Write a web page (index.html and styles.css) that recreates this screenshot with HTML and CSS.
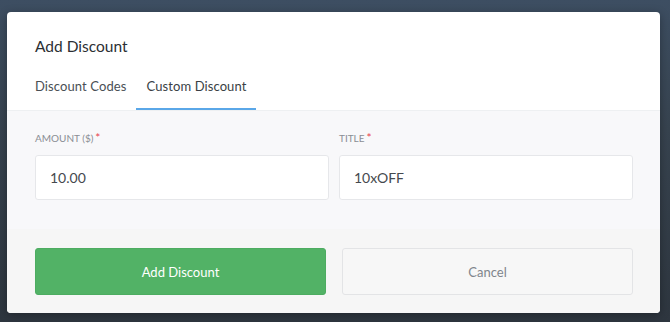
FILE: index.html
```html
<!DOCTYPE html>
<html lang="en">
<head>
  <meta charset="UTF-8" />
  <title>Add Discount</title>
  <link rel="stylesheet" href="styles.css">
</head>
<body>

<div class="backdrop">
  <div class="modal">
    <div class="modal-header">
      <h2>Add Discount</h2>
      <div class="tabs">
        <span class="tab">Discount Codes</span>
        <span class="tab active">Custom Discount</span>
      </div>
    </div>

    <div class="modal-body">
      <div class="field">
        <label>AMOUNT ($)<span class="req">*</span></label>
        <div class="input">10.00</div>
      </div>
      <div class="field">
        <label>TITLE<span class="req">*</span></label>
        <div class="input">10xOFF</div>
      </div>
    </div>

    <div class="modal-footer">
      <button class="btn btn-primary">Add Discount</button>
      <button class="btn btn-cancel">Cancel</button>
    </div>
  </div>
</div>

</body>
</html>
```

FILE: styles.css
```css
* {
  box-sizing: border-box;
}

body {
  margin: 0;
  padding: 0;
  font-family: Lato, 'Open Sans', sans-serif;
  background: #333c46;
  overflow: hidden;
}

.backdrop {
  width: 670px;
  height: 322px;
  padding: 12px 0 0 7px;
  background: linear-gradient(180deg, #3d4e62 0%, #37434f 40%, #2e363f 100%);
}

.modal {
  width: 653px;
  height: 301px;
  background: #fff;
  border-radius: 4px;
  overflow: hidden;
  box-shadow: 0 2px 10px rgba(0, 0, 0, 0.3);
}

.modal-header {
  padding: 24px 27px 0 28px;
  border-bottom: 1px solid #eef0f2;
}

.modal-header h2 {
  margin: 0;
  font-size: 15.5px;
  line-height: 20px;
  font-weight: 400;
  color: #2b2f33;
}

.tabs {
  display: flex;
  margin: 20px 0 0 -10px;
}

.tab {
  padding: 0 10px 12px;
  font-size: 13px;
  line-height: 20px;
  color: #4a4f55;
  letter-spacing: 0.1px;
  border-bottom: 2px solid transparent;
}

.tab.active {
  color: #3a3f45;
  border-bottom-color: #5aa7e8;
}

.modal-body {
  display: grid;
  grid-template-columns: 1fr 1fr;
  gap: 10px;
  padding: 20px 27px 29px 28px;
  background: #f8f8fa;
}

.field label {
  display: block;
  font-size: 10px;
  line-height: 14px;
  color: #8a8e94;
  margin-bottom: 10px;
}

.req {
  color: #e8434f;
  margin-left: 2px;
  font-size: 12px;
  line-height: 10px;
}

.input {
  height: 45px;
  padding: 0 14px;
  background: #fff;
  border: 1px solid #e6e7ea;
  border-radius: 3px;
  font-size: 14px;
  line-height: 43px;
  color: #45494e;
}

.modal-footer {
  display: grid;
  grid-template-columns: 1fr 1fr;
  gap: 16px;
  padding: 19px 27px 0 28px;
  height: 84px;
  background: #f6f6f6;
}

.btn {
  height: 47px;
  border-radius: 3px;
  font-family: inherit;
  font-size: 13px;
  cursor: pointer;
}

.btn-primary {
  background: #52b266;
  border: 1px solid #4dac61;
  color: #fff;
}

.btn-cancel {
  background: #f7f7f7;
  border: 1px solid #e3e4e6;
  color: #80858c;
}
```
